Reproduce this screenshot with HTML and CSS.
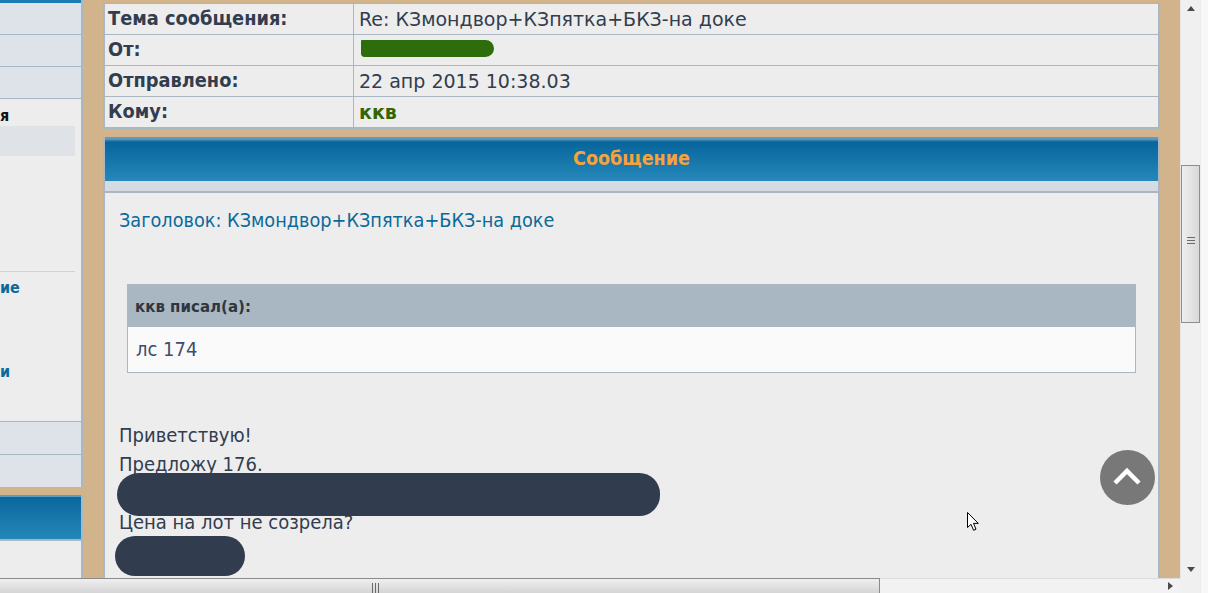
FILE: index.html
```html
<!DOCTYPE html>
<html lang="ru">
<head>
    <meta charset="UTF-8">
    <meta name="viewport" content="width=device-width, initial-scale=1.0">
    <title>Личное сообщение</title>
    <link rel="stylesheet" href="styles.css">
</head>
<body>
    <div class="window">
        <div class="viewport">
            <div class="page">
                <aside class="sidebar">
                    <div class="side-block">
                        <div class="side-top"></div>
                        <div class="side-row"></div>
                        <div class="side-row"></div>
                        <div class="side-row"></div>
                        <div class="side-panel">
                            <div class="side-title">я</div>
                            <div class="side-box"></div>
                            <div class="side-sep"></div>
                            <a class="side-link first" href="#">ие</a>
                            <a class="side-link second" href="#">и</a>
                        </div>
                        <div class="side-row lower"></div>
                        <div class="side-row lower"></div>
                    </div>
                    <div class="side-block filled">
                        <div class="side-head"></div>
                    </div>
                </aside>

                <main class="content">
                    <div class="info">
                        <div class="info-row">
                            <div class="info-label">Тема сообщения:</div>
                            <div class="info-value">Re: КЗмондвор+КЗпятка+БКЗ-на доке</div>
                        </div>
                        <div class="info-row">
                            <div class="info-label">От:</div>
                            <div class="info-value"><span class="redact-green"></span></div>
                        </div>
                        <div class="info-row">
                            <div class="info-label">Отправлено:</div>
                            <div class="info-value">22 апр 2015 10:38.03</div>
                        </div>
                        <div class="info-row">
                            <div class="info-label">Кому:</div>
                            <div class="info-value user">ккв</div>
                        </div>
                    </div>

                    <section class="message">
                        <div class="message-head">Сообщение</div>
                        <div class="message-strip"></div>
                        <div class="message-body">
                            <div class="message-title">Заголовок: КЗмондвор+КЗпятка+БКЗ-на доке</div>
                            <div class="quote">
                                <div class="quote-head">ккв писал(а):</div>
                                <div class="quote-body">лс 174</div>
                            </div>
                            <div class="text">
                                <div class="line">Приветствую!</div>
                                <div class="line">Предложу 176.</div>
                                <div class="line">С уважением<span class="redact wide"></span></div>
                                <div class="line">Цена на лот не созрела?</div>
                                <div class="line">&nbsp;<span class="redact short"></span></div>
                            </div>
                        </div>
                    </section>
                </main>
            </div>

            <a class="to-top" href="#">
                <svg width="55" height="55" viewBox="0 0 55 55">
                    <path d="M15 33 L27 21 L39 33" fill="none" stroke="#fff" stroke-width="4.5"/>
                </svg>
            </a>

            <svg class="cursor" width="14" height="20" viewBox="0 0 14 20">
                <path d="M0.5 0.5 L0.5 15.5 L4 12.3 L6.6 18.3 L9 17.2 L6.5 11.4 L11.3 11.4 Z" fill="#fff" stroke="#000" stroke-width="1"/>
            </svg>
        </div>

        <div class="vscroll">
            <div class="arrow-btn">
                <svg width="8" height="5" viewBox="0 0 8 5"><polygon points="0,5 4,0 8,5" fill="#4a4a4a"/></svg>
            </div>
            <div class="vthumb">
                <svg width="8" height="8" viewBox="0 0 8 8">
                    <path d="M0 1.5 H8 M0 4.5 H8 M0 7.5 H8" stroke="#6a6a6a" stroke-width="1"/>
                </svg>
            </div>
            <div class="arrow-btn bottom">
                <svg width="8" height="5" viewBox="0 0 8 5"><polygon points="0,0 8,0 4,5" fill="#4a4a4a"/></svg>
            </div>
        </div>

        <div class="window-edge"></div>

        <div class="hscroll">
            <div class="hthumb">
                <svg width="8" height="10" viewBox="0 0 8 10">
                    <path d="M1.5 0 V10 M4.5 0 V10 M7.5 0 V10" stroke="#6a6a6a" stroke-width="1"/>
                </svg>
            </div>
            <div class="harrow">
                <svg width="5" height="8" viewBox="0 0 5 8"><polygon points="0,0 5,4 0,8" fill="#4a4a4a"/></svg>
            </div>
        </div>

        <div class="scroll-corner"></div>
    </div>
</body>
</html>
```

FILE: styles.css
```css
:root {
    --tan: #d2b48c;
    --panel: #ededed;
    --border: #a9b7c3;
    --row: #dde3e9;
    --text: #323d4f;
    --link: #0b6a9a;
    --user: #336600;
    --redact: #323c4f;
    --condensed: "DejaVu Sans Condensed", "DejaVu Sans", sans-serif;
}

* {
    margin: 0;
    padding: 0;
    box-sizing: border-box;
}

body {
    width: 1208px;
    height: 593px;
    overflow: hidden;
    background-color: #f6f6f6;
    font-family: "DejaVu Sans", sans-serif;
    color: var(--text);
}

a {
    text-decoration: none;
}

.window {
    display: grid;
    grid-template-columns: 1180px 20px 8px;
    grid-template-rows: 578px 15px;
    height: 593px;
}

.viewport {
    position: relative;
    overflow: hidden;
    background-color: var(--tan);
}

.page {
    display: flex;
    gap: 20px;
    height: 578px;
}

/* Left column, scrolled mostly out of view */
.sidebar {
    width: 83px;
    display: flex;
    flex-direction: column;
    gap: 8px;
    overflow: hidden;
}

.side-block {
    border-right: 2px solid var(--border);
    background-color: var(--panel);
}

.side-block.filled {
    flex: 1;
}

.side-top {
    height: 3px;
    background-color: #1b7bb4;
}

.side-row {
    height: 32px;
    background-color: var(--row);
    border-bottom: 1px solid var(--border);
}

.side-row.lower {
    height: 33px;
    border-bottom: none;
    border-top: 1px solid var(--border);
}

.side-panel {
    height: 322px;
    display: flex;
    flex-direction: column;
    font-family: var(--condensed);
    font-stretch: condensed;
    font-weight: bold;
    font-size: 16px;
    line-height: 20px;
}

.side-title {
    margin-top: 7px;
    color: #111;
}

.side-box {
    width: 75px;
    height: 30px;
    background-color: #dfe3e7;
}

.side-sep {
    width: 75px;
    height: 1px;
    margin-top: 115px;
    background-color: #cdd2d7;
}

.side-link {
    color: var(--link);
}

.side-link.first {
    margin-top: 6px;
}

.side-link.second {
    margin-top: 64px;
}

.side-head {
    height: 46px;
    border-top: 2px solid #5b9cc5;
    border-bottom: 2px solid var(--border);
    background: linear-gradient(#0a679c, #2587b9);
}

/* Main column */
.content {
    width: 1057px;
    margin-top: 3px;
    display: flex;
    flex-direction: column;
}

.info {
    border: 2px solid var(--border);
    border-top-width: 1px;
    background-color: var(--panel);
}

.info-row {
    display: grid;
    grid-template-columns: 249px 1fr;
    height: 31px;
    border-bottom: 1px solid var(--border);
    line-height: 30px;
    font-size: 19px;
}

.info-row:last-child {
    height: 30px;
    border-bottom: none;
}

.info-label {
    padding-left: 3px;
    border-right: 1px solid var(--border);
    font-family: var(--condensed);
    font-stretch: condensed;
    font-weight: bold;
    font-size: 19.8px;
}

.info-value {
    padding-left: 5px;
    white-space: nowrap;
    display: flex;
    align-items: center;
}

.info-value.user {
    color: var(--user);
    font-weight: bold;
}

.redact-green {
    width: 133px;
    height: 17px;
    margin: -3px 0 0 2px;
    border-radius: 1px 9px 9px 4px;
    background-color: #2e6d0b;
}

.message {
    flex: 1;
    margin-top: 8px;
    display: flex;
    flex-direction: column;
    border-left: 2px solid var(--border);
    border-right: 2px solid var(--border);
}

.message-head {
    height: 44px;
    line-height: 44px;
    text-align: center;
    background: linear-gradient(#5b9cc5 0, #5b9cc5 2px, #07659b 5px, #2688ba 100%);
    color: #f7a23c;
    font-family: var(--condensed);
    font-stretch: condensed;
    font-weight: bold;
    font-size: 19.5px;
}

.message-strip {
    height: 12px;
    background-color: #d4dbe2;
    border-bottom: 2px solid var(--border);
}

.message-body {
    flex: 1;
    padding: 14px 14px 0;
    background-color: var(--panel);
    font-family: var(--condensed);
    font-stretch: condensed;
    font-size: 20px;
    line-height: 28px;
}

.message-title {
    color: var(--link);
    font-size: 19.7px;
}

.quote {
    margin: 49px 8px 0;
    border: 1px solid var(--border);
}

.quote-head {
    height: 42px;
    line-height: 42px;
    padding-left: 7px;
    background-color: var(--border);
    font-weight: bold;
    font-size: 16.7px;
    color: #2f3640;
}

.quote-body {
    height: 45px;
    line-height: 45px;
    padding-left: 8px;
    background-color: #fafafa;
    color: #3d4d6a;
}

.text {
    margin-top: 48px;
    line-height: 29px;
}

.line {
    position: relative;
}

.redact {
    position: absolute;
    background-color: var(--redact);
}

.redact.wide {
    left: -2px;
    top: -6px;
    width: 543px;
    height: 43px;
    border-radius: 23px 22px 22px 23px;
}

.redact.short {
    left: -4px;
    top: -1px;
    width: 130px;
    height: 40px;
    border-radius: 20px;
}

.to-top {
    position: absolute;
    left: 1100px;
    top: 450px;
    width: 55px;
    height: 55px;
    border-radius: 50%;
    background-color: #787878;
}

.to-top svg {
    display: block;
}

.cursor {
    position: absolute;
    left: 967px;
    top: 512px;
}

/* Browser scrollbars */
.vscroll {
    display: flex;
    flex-direction: column;
    background-color: #f0f0f0;
    border-left: 1px solid #e4e4e4;
}

.arrow-btn {
    height: 17px;
    display: flex;
    align-items: center;
    justify-content: center;
}

.arrow-btn.bottom {
    margin-top: auto;
}

.vthumb {
    height: 158px;
    margin-top: 148px;
    width: 19px;
    border: 1px solid #8e8e8e;
    background: linear-gradient(90deg, #eeeeee, #d9d9d9);
    display: flex;
    align-items: center;
    justify-content: center;
    padding-bottom: 8px;
}

.window-edge {
    grid-row: 1 / 3;
    grid-column: 3;
    background-color: #f7f7f7;
    border-left: 1px solid #ececec;
}

.hscroll {
    display: flex;
    background-color: #f2f2f2;
    border-top: 1px solid #dcdcdc;
}

.hthumb {
    width: 880px;
    margin-top: -1px;
    padding-left: 371px;
    border-top: 1px solid #8a8a8a;
    border-right: 1px solid #8a8a8a;
    background: linear-gradient(#efefef, #d5d5d5);
    display: flex;
    align-items: flex-end;
}

.harrow {
    margin-left: auto;
    width: 20px;
    display: flex;
    align-items: center;
    justify-content: center;
}

.scroll-corner {
    background-color: #f0f0f0;
}
```
